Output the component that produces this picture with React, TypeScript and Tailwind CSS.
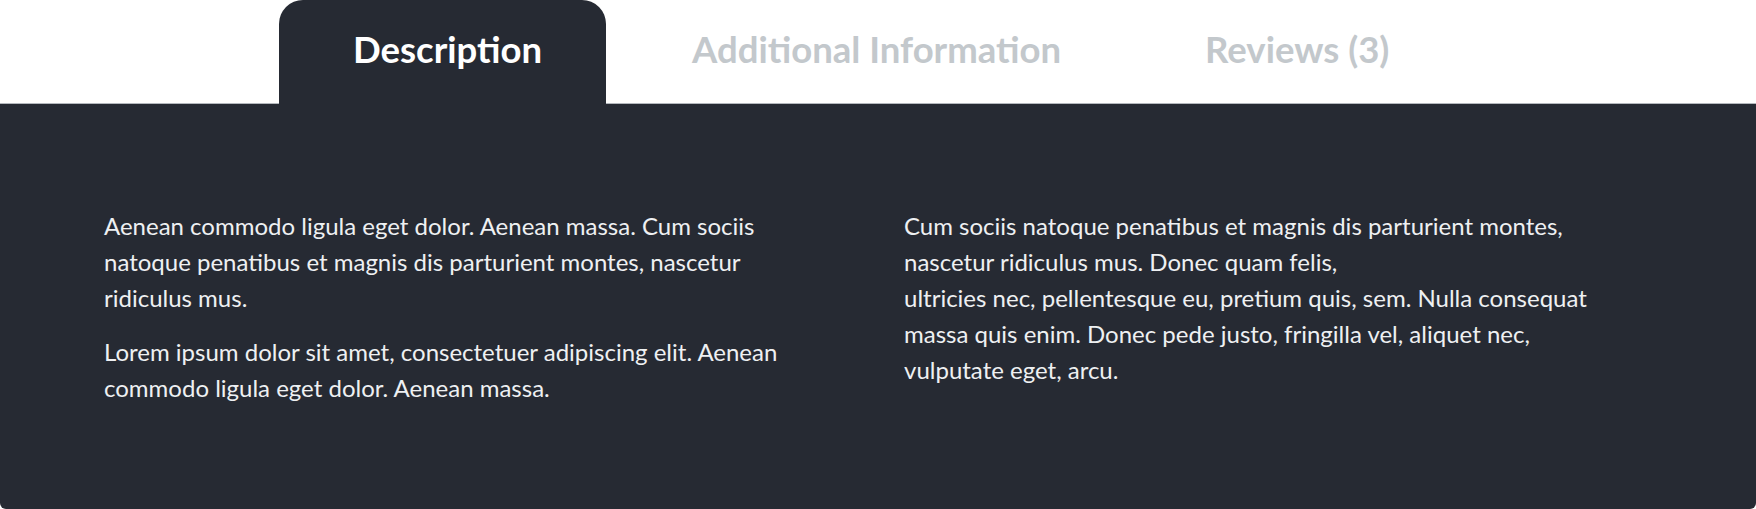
import React from "react";

const tabs = [
  { label: "Description", pad: "pl-[74px] pr-[64px]" },
  { label: "Additional Information", pad: "pl-[76px] pr-[60px]" },
  { label: "Reviews (3)", pad: "pl-[74px] pr-[64px]" },
];

export default function App() {
  const active = 0;

  return (
    <div className="w-[1756px] h-[509px] bg-white font-['Lato','Liberation_Sans',sans-serif]">
      <div className="flex h-[103px] pl-[279px] gap-[10px]">
        {tabs.map((tab, i) => (
          <div
            key={tab.label}
            className={
              i === active
                ? `relative z-10 flex h-[104px] items-center pb-[5px] rounded-t-[24px] bg-[#262a33] text-white ${tab.pad}`
                : `flex h-[103px] items-center pb-[5px] text-[#c3c8cc] ${tab.pad}`
            }
          >
            <span className="text-[36.5px] font-bold leading-none whitespace-nowrap">{tab.label}</span>
          </div>
        ))}
      </div>

      <div className="h-[406px] border-t border-[#b4b8bd] bg-[#262a33] rounded-b-[6px] flex items-center px-[104px]">
        <div className="grid grid-cols-[705px_705px] gap-x-[95px] items-start text-[24px] leading-[36px] text-[#eef0f2]">
          <div className="flex flex-col gap-[18px]">
            <p>
              Aenean commodo ligula eget dolor. Aenean massa. Cum sociis natoque penatibus et magnis dis
              parturient montes, nascetur ridiculus mus.
            </p>
            <p>
              Lorem ipsum dolor sit amet, consectetuer adipiscing elit. Aenean commodo ligula eget dolor.
              Aenean massa.
            </p>
          </div>
          <div>
            <p>
              Cum sociis natoque penatibus et magnis dis parturient montes, nascetur ridiculus mus. Donec
              quam felis,
              <br />
              ultricies nec, pellentesque eu, pretium quis, sem. Nulla consequat massa quis enim. Donec
              pede justo, fringilla vel, aliquet nec, vulputate eget, arcu.
            </p>
          </div>
        </div>
      </div>
    </div>
  );
}
